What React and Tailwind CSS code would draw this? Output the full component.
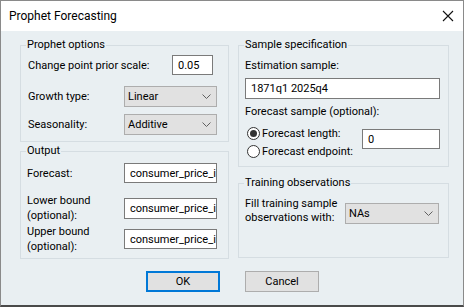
import React from "react";

const FONT = "font-['Segoe_UI','Roboto',sans-serif]";

function Chevron() {
  return (
    <svg width="9" height="5" viewBox="0 0 9 5" className="shrink-0">
      <polyline points="0.5,0.5 4.5,4.5 8.5,0.5" fill="none" stroke="#606060" strokeWidth="1" />
    </svg>
  );
}

function Select({ value, className = "" }) {
  return (
    <div
      className={`h-[21px] shrink-0 bg-[#e1e1e1] border border-[#adadad] flex items-center justify-between pl-[3px] pr-[5px] ${className}`}
    >
      <span>{value}</span>
      <Chevron />
    </div>
  );
}

function Field({ value, className = "" }) {
  return (
    <div
      className={`h-[20px] shrink-0 bg-white border border-[#7a7a7a] flex items-center pl-[5px] overflow-hidden whitespace-nowrap ${className}`}
    >
      {value}
    </div>
  );
}

function Group({ title, className = "", children }) {
  return (
    <fieldset className={`border border-[#d5dde2] m-0 p-0 ${className}`}>
      <legend className="ml-[5px] px-[1px] leading-[16px]">{title}</legend>
      {children}
    </fieldset>
  );
}

function Radio({ checked, label }) {
  return (
    <div className="flex items-center h-[18px] whitespace-nowrap">
      <span className="w-[13px] h-[13px] rounded-full border border-[#333] bg-white flex items-center justify-center">
        {checked && <span className="w-[7px] h-[7px] rounded-full bg-[#333]" />}
      </span>
      <span className="ml-[2px]">{label}</span>
    </div>
  );
}

export default function App() {
  return (
    <div
      className={`w-[464px] h-[307px] bg-[#e9eff2] border border-[#8a8a8a] border-b-2 border-b-[#4a4a4a] flex flex-col text-[11px] leading-[15px] text-black ${FONT}`}
    >
      {/* title bar */}
      <div className="h-[30px] bg-white flex items-center justify-between pl-[8px] pr-[9px] text-[12px]">
        <span>Prophet Forecasting</span>
        <svg width="12" height="12" viewBox="0 0 12 12">
          <path d="M1 1L11 11M11 1L1 11" stroke="#111" strokeWidth="1.1" />
        </svg>
      </div>

      <div className="flex gap-[9px] pl-[19px] pt-[6px]">
        {/* left column */}
        <div className="w-[209px] flex flex-col">
          <Group title="Prophet options" className="h-[105px]">
            <div className="pl-[7px] pr-[11px]">
              <div className="flex items-center justify-between mt-[2px] pr-[4px]">
                <span className="whitespace-nowrap">Change point prior scale:</span>
                <Field value="0.05" className="w-[41px]" />
              </div>
              <div className="flex items-center justify-between mt-[11px]">
                <span>Growth type:</span>
                <Select value="Linear" className="w-[93px]" />
              </div>
              <div className="flex items-center justify-between mt-[7px]">
                <span>Seasonality:</span>
                <Select value="Additive" className="w-[93px]" />
              </div>
            </div>
          </Group>

          <Group title="Output" className="h-[116px] mt-[1px]">
            <div className="pl-[6px] pr-[11px]">
              <div className="flex items-center justify-between mt-[4px]">
                <span>Forecast:</span>
                <Field value="consumer_price_index_forecast" className="w-[93px]" />
              </div>
              <div className="flex items-center justify-between mt-[10px]">
                <span className="whitespace-nowrap">
                  Lower bound
                  <br />
                  (optional):
                </span>
                <Field value="consumer_price_index_lower" className="w-[93px] h-[21px]" />
              </div>
              <div className="flex items-center justify-between mt-[1px]">
                <span className="whitespace-nowrap">
                  Upper bound
                  <br />
                  (optional):
                </span>
                <Field value="consumer_price_index_upper" className="w-[93px]" />
              </div>
            </div>
          </Group>
        </div>

        {/* right column */}
        <div className="w-[211px] flex flex-col">
          <Group title="Sample specification" className="h-[130px]">
            <div className="pl-[6px] pr-[8px]">
              <div className="mt-[5px]">Estimation sample:</div>
              <Field value="1871q1 2025q4" className="mt-[5px] h-[21px]" />
              <div className="mt-[5px]">Forecast sample (optional):</div>
              <div className="flex items-start justify-between mt-[5px]">
                <div className="flex flex-col ml-[2px]">
                  <Radio checked label="Forecast length:" />
                  <Radio label="Forecast endpoint:" />
                </div>
                <Field value="0" className="w-[78px] mt-[5px]" />
              </div>
            </div>
          </Group>

          <Group title="Training observations" className="h-[83px] mt-[8px]">
            <div className="pl-[6px] pr-[9px] flex items-start justify-between mt-[6px] leading-[14px]">
              <span className="whitespace-nowrap">
                Fill training sample
                <br />
                observations with:
              </span>
              <Select value="NAs" className="w-[94px] mt-[6px]" />
            </div>
          </Group>
        </div>
      </div>

      {/* buttons */}
      <div className="flex justify-center gap-[25px] mt-[12px] pl-[1px]">
        <button className="w-[74px] h-[21px] bg-[#e1e1e1] border-2 border-[#0078d7] leading-none">
          OK
        </button>
        <button className="w-[74px] h-[21px] bg-[#e1e1e1] border border-[#adadad] leading-none">
          Cancel
        </button>
      </div>
    </div>
  );
}
